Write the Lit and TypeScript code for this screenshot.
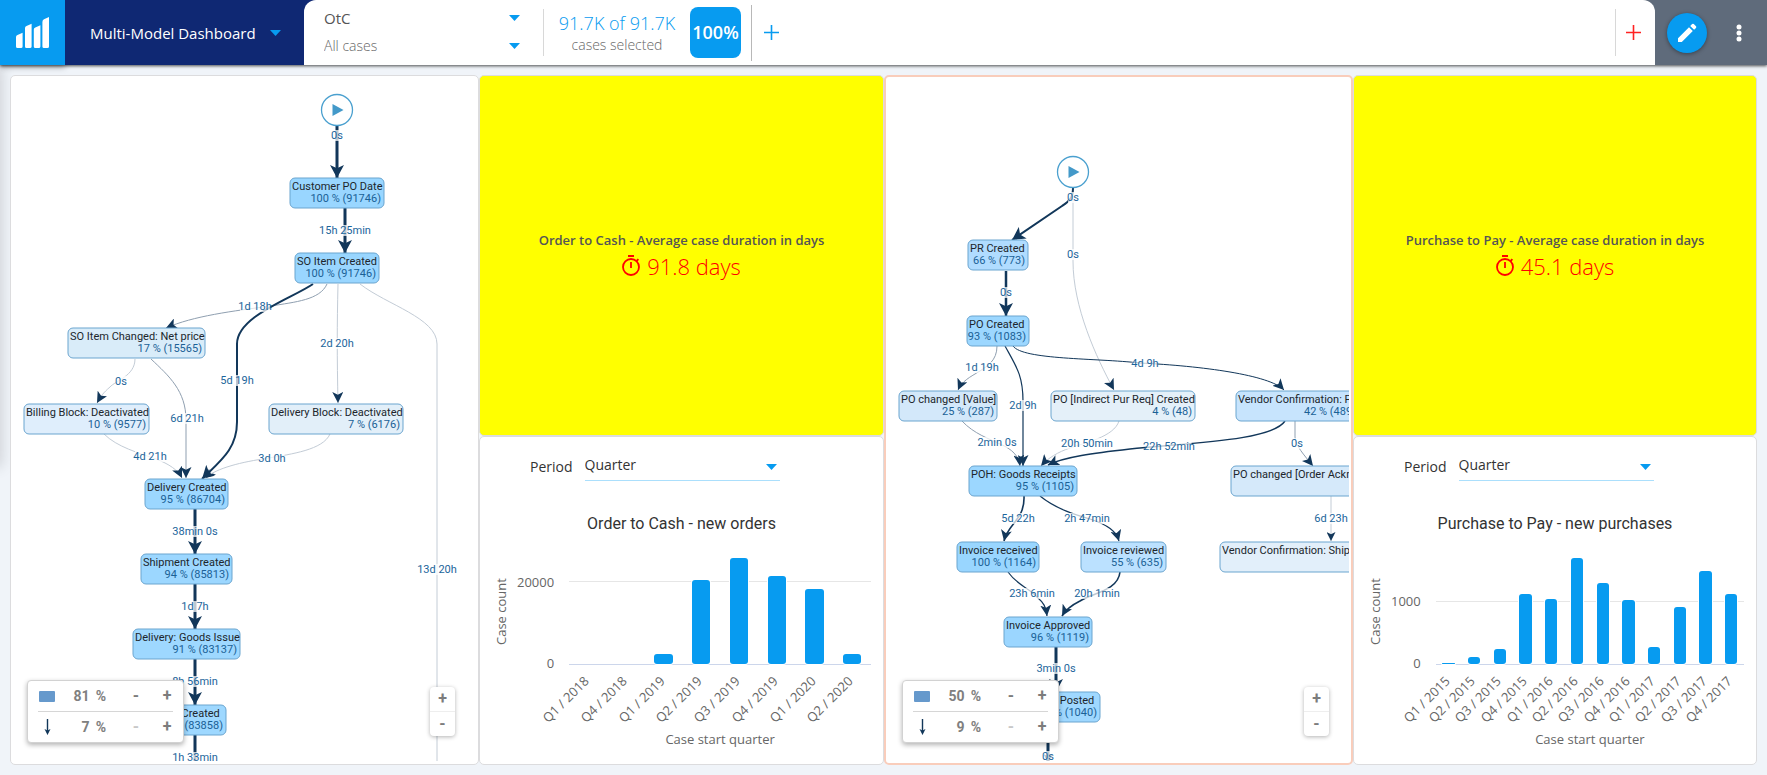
import { LitElement, html, svg, css, nothing } from "lit";
import { customElement, property } from "lit/decorators.js";

interface FlowNode {
  x: number;
  y: number;
  w: number;
  title: string;
  stat: string;
  fill: string;
}
interface FlowEdge {
  d: string;
  width: number;
  color: string;
  head?: "lg" | "md" | "sm";
}
type FlowLabel = [text: string, x: number, y: number];
interface Flow {
  start: [number, number];
  nodes: FlowNode[];
  edges: FlowEdge[];
  labels: FlowLabel[];
}
interface ChartData {
  title: string;
  max: number;
  tick: number;
  items: [string, number][];
}

const INK = "#12375a";
const MID = "#8f9fb0";
const PALE = "#c3ccd6";

const orderFlow: Flow = {
  start: [326, 34],
  nodes: [
    { x: 279, y: 102, w: 94, title: "Customer PO Date", stat: "100 % (91746)", fill: "#99d6ff" },
    { x: 284, y: 177, w: 84, title: "SO Item Created", stat: "100 % (91746)", fill: "#99d6ff" },
    { x: 57, y: 252, w: 137, title: "SO Item Changed: Net price", stat: "17 % (15565)", fill: "#d9ecf9" },
    { x: 13, y: 328, w: 125, title: "Billing Block: Deactivated", stat: "10 % (9577)", fill: "#dfeefc" },
    { x: 258, y: 328, w: 134, title: "Delivery Block: Deactivated", stat: "7 % (6176)", fill: "#e2eff9" },
    { x: 134, y: 403, w: 83, title: "Delivery Created", stat: "95 % (86704)", fill: "#9cd7ff" },
    { x: 130, y: 478, w: 91, title: "Shipment Created", stat: "94 % (85813)", fill: "#9cd7ff" },
    { x: 122, y: 553, w: 107, title: "Delivery: Goods Issue", stat: "91 % (83137)", fill: "#9ed8ff" },
    { x: 136, y: 629, w: 79, title: "Billing Created", stat: "91 % (83858)", fill: "#9ed8ff" },
  ],
  edges: [
    { d: "M326 50V102", width: 3, color: INK, head: "lg" },
    { d: "M334 132V177", width: 3, color: INK, head: "lg" },
    { d: "M316 208C309 224 284 226 260 230C222 235 182 240 155 252", width: 1, color: MID, head: "md" },
    { d: "M349 208C376 229 426 242 426 268V686", width: 1, color: PALE },
    { d: "M327 208C326 250 326 280 327 327", width: 1, color: PALE, head: "md" },
    { d: "M302 208C282 222 226 240 226 268V346C226 374 208 386 191 403", width: 2, color: INK, head: "lg" },
    { d: "M124 283C124 300 104 305 99 311C92 317 90 320 86 327", width: 1, color: PALE, head: "md" },
    { d: "M140 283C158 300 175 315 175 344V402", width: 1, color: MID, head: "md" },
    { d: "M93 358C106 371 128 377 145 383C158 388 167 394 171 402", width: 1, color: PALE, head: "md" },
    { d: "M319 358C312 374 280 378 258 382C230 386 206 392 194 402", width: 1, color: PALE, head: "sm" },
    { d: "M184 433V478", width: 3, color: INK, head: "lg" },
    { d: "M184 508V553", width: 3, color: INK, head: "lg" },
    { d: "M184 583V629", width: 3, color: INK, head: "lg" },
    { d: "M184 659V686", width: 3, color: INK },
  ],
  labels: [
    ["0s", 326, 63],
    ["15h 25min", 334, 158],
    ["1d 18h", 244, 234],
    ["5d 19h", 226, 308],
    ["2d 20h", 326, 271],
    ["0s", 110, 309],
    ["6d 21h", 176, 346],
    ["4d 21h", 139, 384],
    ["3d 0h", 261, 386],
    ["38min 0s", 184, 459],
    ["1d 7h", 184, 534],
    ["8h 56min", 184, 609],
    ["1h 33min", 184, 685],
    ["13d 20h", 426, 497],
  ],
};

const purchaseFlow: Flow = {
  start: [187, 95],
  nodes: [
    { x: 82, y: 163, w: 60, title: "PR Created", stat: "66 % (773)", fill: "#b0dcff" },
    { x: 81, y: 239, w: 62, title: "PO Created", stat: "93 % (1083)", fill: "#9cd7ff" },
    { x: 13, y: 314, w: 98, title: "PO changed [Value]", stat: "25 % (287)", fill: "#d3e8fa" },
    { x: 165, y: 314, w: 144, title: "PO [Indirect Pur Req] Created", stat: "4 % (48)", fill: "#e4f0f9" },
    { x: 350, y: 314, w: 123, title: "Vendor Confirmation: Pr", stat: "42 % (489)", fill: "#c7e4fd" },
    { x: 83, y: 389, w: 108, title: "POH: Goods Receipts", stat: "95 % (1105)", fill: "#9cd7ff" },
    { x: 345, y: 389, w: 200, title: "PO changed [Order Acknow]", stat: "20 % (235)", fill: "#d5e9fa" },
    { x: 71, y: 465, w: 82, title: "Invoice received", stat: "100 % (1164)", fill: "#99d6ff" },
    { x: 195, y: 465, w: 85, title: "Invoice reviewed", stat: "55 % (635)", fill: "#bbe1ff" },
    { x: 334, y: 465, w: 220, title: "Vendor Confirmation: Shipping", stat: "5 % (58)", fill: "#e2effa" },
    { x: 118, y: 540, w: 88, title: "Invoice Approved", stat: "96 % (1119)", fill: "#9bd6ff" },
    { x: 117, y: 615, w: 97, title: "PO Invoice Posted", stat: "89 % (1040)", fill: "#9fd8ff" },
  ],
  edges: [
    { d: "M187 111V184C187 230 210 280 228 313", width: 1, color: PALE, head: "md" },
    { d: "M187 111C187 122 182 125 176 129L126 163", width: 2, color: INK, head: "lg" },
    { d: "M120 194V239", width: 2.5, color: INK, head: "lg" },
    { d: "M111 269C111 284 101 289 94 294C84 300 76 304 72 313", width: 1, color: MID, head: "md" },
    { d: "M119 269C130 289 137 298 137 324V389", width: 1.2, color: INK, head: "md" },
    { d: "M127 269C137 283 210 281 254 286C316 289 384 298 398 313", width: 1, color: INK, head: "md" },
    { d: "M76 344C88 357 104 362 114 367C126 372 133 379 134 389", width: 1, color: MID, head: "md" },
    { d: "M233 344C228 360 198 366 184 371C172 375 162 381 155 389", width: 1, color: PALE, head: "md" },
    { d: "M399 344C386 364 300 366 244 372C208 376 178 380 162 388", width: 1.4, color: INK, head: "md" },
    { d: "M409 344V360C409 368 418 378 427 389", width: 1, color: MID, head: "md" },
    { d: "M138 419C139 443 122 446 118 464", width: 1.6, color: INK, head: "md" },
    { d: "M154 419C170 432 190 438 204 442C222 448 230 454 233 464", width: 1.2, color: INK, head: "md" },
    { d: "M445 419V464", width: 1, color: PALE, head: "sm" },
    { d: "M122 495C132 509 142 510 151 520C158 526 160 530 161 539", width: 1.2, color: INK, head: "md" },
    { d: "M234 495C232 514 206 516 194 524C186 528 180 532 176 539", width: 1.6, color: INK, head: "md" },
    { d: "M170 570V615", width: 3, color: INK, head: "lg" },
    { d: "M162 645V686", width: 3, color: INK, head: "sm" },
  ],
  labels: [
    ["0s", 187, 124],
    ["0s", 187, 181],
    ["0s", 120, 219],
    ["1d 19h", 96, 294],
    ["2d 9h", 137, 332],
    ["4d 9h", 259, 290],
    ["2min 0s", 111, 369],
    ["20h 50min", 201, 370],
    ["22h 52min", 283, 373],
    ["0s", 411, 370],
    ["5d 22h", 132, 445],
    ["2h 47min", 201, 445],
    ["6d 23h", 445, 445],
    ["23h 6min", 146, 520],
    ["20h 1min", 211, 520],
    ["3min 0s", 170, 595],
    ["0s", 162, 683],
  ],
};

const orderChart: ChartData = {
  title: "Order to Cash - new orders",
  max: 26000,
  tick: 20000,
  items: [
    ["Q1 / 2018", 0],
    ["Q4 / 2018", 0],
    ["Q1 / 2019", 2500],
    ["Q2 / 2019", 20700],
    ["Q3 / 2019", 26000],
    ["Q4 / 2019", 21600],
    ["Q1 / 2020", 18500],
    ["Q2 / 2020", 2500],
  ],
};

const purchaseChart: ChartData = {
  title: "Purchase to Pay - new purchases",
  max: 1700,
  tick: 1000,
  items: [
    ["Q1 / 2015", 20],
    ["Q2 / 2015", 115],
    ["Q3 / 2015", 240],
    ["Q4 / 2015", 1130],
    ["Q1 / 2016", 1050],
    ["Q2 / 2016", 1700],
    ["Q3 / 2016", 1300],
    ["Q4 / 2016", 1020],
    ["Q1 / 2017", 275],
    ["Q2 / 2017", 910],
    ["Q3 / 2017", 1495],
    ["Q4 / 2017", 1115],
  ],
};

const caret = html`<svg class="caret" width="11" height="6" viewBox="0 0 11 6" aria-hidden="true">
  <path d="M0 0H11L5.5 6Z" fill="#079bf0" />
</svg>`;

@customElement("process-flow")
export class ProcessFlow extends LitElement {
  @property({ attribute: false }) flow!: Flow;
  @property() activities = "";
  @property() connections = "";

  static styles = css`
    :host {
      display: block;
      position: relative;
      height: 100%;
      font-family: Roboto, sans-serif;
    }
    .graph {
      display: block;
      width: 100%;
      height: 100%;
    }
    .graph text {
      font-size: 11px;
    }
    .title {
      fill: #20262c;
    }
    .stat {
      fill: #1a6196;
      text-anchor: end;
    }
    .label {
      fill: #1c659b;
      text-anchor: middle;
    }
    .box {
      stroke: #6ba5cf;
    }
    .panel {
      position: absolute;
      left: 16px;
      bottom: 18px;
      width: 157px;
      box-sizing: border-box;
      padding: 0 10px;
      background: #fff;
      border: 1px solid #d2d2d2;
      border-radius: 4px;
      box-shadow: 0 2px 5px rgba(0, 0, 0, 0.3);
    }
    .line {
      display: grid;
      grid-template-columns: 18px 50px 40px minmax(0, 1fr);
      align-items: center;
      height: 30px;
      color: #808080;
      font-size: 14px;
      font-weight: 700;
    }
    .line + .line {
      border-top: 1px solid #d6d6d6;
    }
    .line svg {
      justify-self: center;
    }
    .value {
      display: flex;
      justify-content: flex-end;
      gap: 6px;
    }
    button {
      border: 0;
      padding: 0;
      background: none;
      font: 700 16px/24px Roboto, sans-serif;
      color: #7c7c7c;
      width: 20px;
      height: 24px;
      text-align: center;
    }
    button:disabled {
      color: #c8c8c8;
    }
    .line button {
      justify-self: end;
    }
    .line button:last-child {
      margin-right: -4px;
    }
    .zoom {
      position: absolute;
      right: 20px;
      bottom: 25px;
      display: grid;
      width: 25px;
      background: #fff;
      border-radius: 4px;
      box-shadow: 0 1px 4px rgba(0, 0, 0, 0.3);
    }
    .zoom button {
      width: 25px;
    }
    .zoom button + button {
      border-top: 1px solid #eee;
      height: 25px;
    }
  `;

  private head(id: string, len: number, half: number) {
    return svg`<marker id=${id} markerUnits="userSpaceOnUse" orient="auto" refX=${len} refY=${half}
      markerWidth=${len} markerHeight=${half * 2}>
      <path d="M0 0L${len} ${half}L0 ${half * 2}L${len / 4} ${half}Z" fill=${INK}></path>
    </marker>`;
  }

  render() {
    const { start, nodes, edges, labels } = this.flow;
    const [cx, cy] = start;
    return html`
      <svg class="graph" role="img" aria-label="Process flow">
        <defs>${this.head("lg", 13, 7)}${this.head("md", 11, 5.5)}${this.head("sm", 9, 4.5)}</defs>
        ${edges.map(
          (e) => svg`<path d=${e.d} fill="none" stroke=${e.color} stroke-width=${e.width}
            marker-end=${e.head ? `url(#${e.head})` : nothing}></path>`
        )}
        <circle cx=${cx} cy=${cy} r="15.5" fill="#fff" stroke="#4aa0cf" stroke-width="1.3"></circle>
        <path d="M${cx - 4.5} ${cy - 6}L${cx + 6.5} ${cy}L${cx - 4.5} ${cy + 6}Z" fill="#4399c9"></path>
        ${nodes.map(
          (n) => svg`<g>
            <rect class="box" x=${n.x} y=${n.y} width=${n.w} height="30" rx="5" fill=${n.fill}></rect>
            <text class="title" x=${n.x + 2} y=${n.y + 12}>${n.title}</text>
            <text class="stat" x=${n.x + n.w - 3} y=${n.y + 24}>${n.stat}</text>
          </g>`
        )}
        ${labels.map(([text, x, y]) => {
          const w = text.length * 5;
          return svg`<rect x=${x - w / 2} y=${y - 9} width=${w} height="11" fill="#fff" fill-opacity=".72"></rect>
            <text class="label" x=${x} y=${y}>${text}</text>`;
        })}
      </svg>
      <div class="panel">
        <div class="line">
          <svg width="16" height="11" aria-hidden="true"><rect width="16" height="11" rx="1" fill="#6699cc" /></svg>
          <span class="value"><span>${this.activities}</span><span>%</span></span>
          <button aria-label="Fewer activities">-</button>
          <button aria-label="More activities">+</button>
        </div>
        <div class="line">
          <svg width="7" height="16" viewBox="0 0 7 16" aria-hidden="true">
            <path d="M3.5 0V12" stroke=${INK} stroke-width="1.4" />
            <path d="M0.5 10L3.5 16L6.5 10L3.5 11.5Z" fill=${INK} />
          </svg>
          <span class="value"><span>${this.connections}</span><span>%</span></span>
          <button aria-label="Fewer connections" disabled>-</button>
          <button aria-label="More connections">+</button>
        </div>
      </div>
      <div class="zoom">
        <button aria-label="Zoom in">+</button>
        <button aria-label="Zoom out">-</button>
      </div>
    `;
  }
}

@customElement("case-chart")
export class CaseChart extends LitElement {
  @property({ attribute: false }) data!: ChartData;

  static styles = css`
    :host {
      display: block;
      font-family: "Open Sans", sans-serif;
      color: #333;
    }
    .period {
      display: flex;
      align-items: flex-start;
      gap: 12px;
      height: 30px;
      padding: 15px 0 0 50px;
      font-size: 14px;
    }
    label {
      line-height: 30px;
    }
    .pick {
      position: relative;
      flex: 0 1 195px;
      border-bottom: 1px solid #abdffc;
    }
    select {
      appearance: none;
      display: block;
      width: 100%;
      height: 28px;
      margin: 0;
      padding: 0 0 2px;
      border: 0;
      background: none;
      font: 14px/26px "Open Sans", sans-serif;
      color: #333;
    }
    .caret {
      position: absolute;
      right: 3px;
      top: 12px;
      pointer-events: none;
    }
    h2 {
      margin: 30px 0 0;
      font: 400 16px/24px Roboto, sans-serif;
      text-align: center;
    }
    .chart {
      display: grid;
      grid-template-columns: 18px auto minmax(0, 1fr);
      grid-template-rows: 107px 65px 20px;
      padding: 22px 12px 0 12px;
      font-size: 13px;
      line-height: 18px;
      color: #666;
    }
    .ytitle {
      writing-mode: vertical-rl;
      transform: rotate(180deg);
      text-align: center;
    }
    .ticks {
      display: grid;
      grid-template-rows: minmax(0, 1fr) auto;
      margin: 0 15px 0 7px;
      padding-bottom: 2px;
      text-align: right;
    }
    .tick {
      line-height: 0;
    }
    .top {
      align-self: end;
    }
    .plot {
      position: relative;
      display: flex;
      border-bottom: 1px solid #ccd6eb;
    }
    .rule {
      position: absolute;
      left: 0;
      right: 0;
      height: 1px;
      background: #e6e6e6;
    }
    .slot {
      position: relative;
      flex: 1;
      display: flex;
      align-items: flex-end;
      justify-content: center;
    }
    .bar {
      width: 48%;
      background: #079bf0;
      border-radius: 3px;
      box-shadow: 0 0 0 1px #fff;
    }
    .cats {
      grid-column: 3;
      display: flex;
      margin-left: -8px;
      margin-right: 8px;
      padding-top: 7px;
    }
    .cat {
      flex: 1;
      min-width: 0;
    }
    .half {
      width: 50%;
      display: flex;
      justify-content: flex-end;
    }
    .half span {
      height: 18px;
      white-space: nowrap;
      transform: rotate(-45deg);
      transform-origin: 100% 0;
    }
    .xtitle {
      grid-column: 3;
      text-align: center;
    }
  `;

  render() {
    const { title, max, tick, items } = this.data;
    return html`
      <div class="period">
        <label for="period">Period</label>
        <div class="pick">
          <select id="period">
            <option>Quarter</option>
            <option>Month</option>
          </select>
          ${caret}
        </div>
      </div>
      <h2>${title}</h2>
      <div class="chart">
        <div class="ytitle">Case count</div>
        <div class="ticks">
          <div class="tick top" style="height:${(tick / max) * 100}%">${tick}</div>
          <div class="tick">0</div>
        </div>
        <div class="plot">
          <div class="rule" style="bottom:${(tick / max) * 100}%"></div>
          ${items.map(
            ([, v]) => html`<div class="slot">
              ${v ? html`<div class="bar" style="height:${(v / max) * 100}%"></div>` : nothing}
            </div>`
          )}
        </div>
        <div class="cats">
          ${items.map(([name]) => html`<div class="cat"><div class="half"><span>${name}</span></div></div>`)}
        </div>
        <div class="xtitle">Case start quarter</div>
      </div>
    `;
  }
}

@customElement("app-root")
export class AppRoot extends LitElement {
  static styles = css`
    :host {
      display: flex;
      flex-direction: column;
      height: 100vh;
      overflow: hidden;
      background: #f0f4f9;
      font-family: "Open Sans", sans-serif;
    }
    button {
      border: 0;
      padding: 0;
      background: none;
      font: inherit;
      color: inherit;
    }
    header {
      position: relative;
      z-index: 1;
      display: flex;
      height: 65px;
      flex: none;
      background: linear-gradient(90deg, #0f2873 50%, #5f6b7b 50%);
      box-shadow: 0 1px 3px rgba(0, 0, 0, 0.7);
    }
    .logo {
      display: grid;
      place-items: center;
      width: 65px;
      background: #079bf0;
      box-shadow: 0 2px 6px rgba(0, 0, 0, 0.35);
    }
    .board {
      display: flex;
      align-items: center;
      justify-content: space-between;
      box-sizing: border-box;
      width: 239px;
      padding: 0 23px 0 25px;
      background: #0f2873;
      color: #fff;
      font-size: 15px;
      font-weight: 500;
    }
    .bar {
      flex: 1;
      display: flex;
      align-items: center;
      background: #fff;
      border-radius: 12px 12px 0 0;
    }
    .models {
      display: grid;
      grid-template-rows: 28px 28px;
      width: 196px;
      padding-bottom: 2px;
      margin-left: 20px;
      margin-right: 23px;
    }
    .model {
      position: relative;
    }
    .model select {
      appearance: none;
      display: block;
      width: 100%;
      height: 28px;
      margin: 0;
      padding: 0;
      border: 0;
      background: none;
      font: 300 14px/28px "Open Sans", sans-serif;
      color: #666;
    }
    .model .main {
      font-size: 15px;
      font-weight: 400;
      color: #555;
    }
    .model .caret {
      position: absolute;
      right: 0;
      top: 11px;
      pointer-events: none;
    }
    .split {
      width: 1px;
      height: 47px;
      background: #d8d8d8;
    }
    .tall {
      height: 56px;
      background: #b8b8b8;
      margin: 0 12px 0 10px;
    }
    .cases {
      width: 146px;
      text-align: center;
    }
    .count {
      font-size: 18px;
      line-height: 24px;
      font-weight: 300;
      color: #079bf0;
    }
    .hint {
      font-size: 14px;
      line-height: 19px;
      font-weight: 300;
      color: #666;
    }
    .badge {
      width: 51px;
      height: 51px;
      border-radius: 8px;
      background: #079bf0;
      color: #fff;
      font-size: 18px;
      font-weight: 600;
      line-height: 51px;
      text-align: center;
    }
    .space {
      flex: 1;
    }
    .end {
      margin-right: 10px;
    }
    .bar button {
      display: grid;
      place-items: center;
      width: 15px;
      height: 15px;
    }
    .bar .red {
      margin-right: 14px;
    }
    .tools {
      display: flex;
      align-items: center;
      width: 112px;
      background: #5f6b7b;
    }
    .edit {
      display: grid;
      place-items: center;
      width: 40px;
      height: 40px;
      margin-left: 12px;
      border-radius: 50%;
      background: #079bf0;
      box-shadow: 0 1px 4px rgba(0, 0, 0, 0.4);
    }
    .more {
      width: 24px;
      height: 24px;
      margin-left: 20px;
    }
    main {
      position: relative;
      flex: 1;
      min-height: 0;
      display: grid;
      grid-template-columns: 469fr 405fr 469fr 404fr;
      padding: 10px;
    }
    main::before {
      content: "";
      position: absolute;
      left: -20px;
      top: 0;
      width: 20px;
      height: 398px;
      box-shadow: 0 2px 14px 2px rgba(0, 0, 0, 0.14);
    }
    .stack {
      display: grid;
      grid-template-rows: 361fr 329fr;
      min-width: 0;
      min-height: 0;
    }
    .card {
      position: relative;
      box-sizing: border-box;
      min-width: 0;
      min-height: 0;
      overflow: hidden;
      background: #fff;
      border: 1px solid #dcdcde;
      border-radius: 5px;
    }
    .flow {
      padding: 0 3px 3px 0;
    }
    .active {
      border: 2px solid #f9cdbb;
      padding: 0 2px 2px 0;
    }
    .kpi {
      display: flex;
      flex-direction: column;
      align-items: center;
      justify-content: center;
      background: #ff0;
    }
    .name {
      font-size: 13px;
      font-weight: 600;
      line-height: 20px;
      color: #555;
      margin: 0;
    }
    .figure {
      display: flex;
      align-items: center;
      gap: 7px;
      margin: 0;
      font-size: 22px;
      font-weight: 300;
      line-height: 32px;
      color: #f00;
    }
  `;

  private plus(color: string) {
    return html`<svg width="15" height="15" viewBox="0 0 15 15" aria-hidden="true">
      <path d="M7.5 0V15M0 7.5H15" stroke=${color} stroke-width="1.6" />
    </svg>`;
  }

  private kpi(name: string, value: string) {
    return html`<section class="card kpi">
      <h2 class="name">${name}</h2>
      <p class="figure">
        <svg width="18" height="21" viewBox="0 0 18 21" fill="none" stroke="#f00" stroke-width="1.8" aria-hidden="true">
          <circle cx="9" cy="12" r="8" />
          <path d="M6 1H12M9 7V13M14.6 6L16.4 4.2" />
        </svg>
        <span>${value}</span>
      </p>
    </section>`;
  }

  render() {
    return html`
      <header>
        <div class="logo">
          <svg width="33" height="31" viewBox="0 0 33 31" fill="#fff" role="img" aria-label="Home">
            <path d="M0 20Q0 18.500 1.500 18L6.600 15.800V29.500Q6.600 31 5 31H1.500Q0 31 0 29.500Z" />
            <path d="M9 11Q9 9.500 10.500 9L15.600 6.800V29.500Q15.600 31 14 31H10.500Q9 31 9 29.500Z" />
            <path d="M17.800 12.500Q17.800 11 19.300 10.500L24.400 8.300V29.500Q24.400 31 22.800 31H19.300Q17.800 31 17.800 29.500Z" />
            <path d="M26.400 5Q26.400 3 28 2.300L33 0V29.500Q33 31 31.400 31H28Q26.400 31 26.400 29.500Z" />
          </svg>
        </div>
        <button class="board"><span>Multi-Model Dashboard</span>${caret}</button>
        <div class="bar">
          <div class="models">
            <div class="model">
              <select class="main" aria-label="Model"><option>OtC</option></select>${caret}
            </div>
            <div class="model">
              <select aria-label="Filter"><option>All cases</option></select>${caret}
            </div>
          </div>
          <div class="split"></div>
          <div class="cases">
            <div class="count">91.7K of 91.7K</div>
            <div class="hint">cases selected</div>
          </div>
          <div class="badge">100%</div>
          <div class="split tall"></div>
          <button aria-label="Add filter">${this.plus("#079bf0")}</button>
          <div class="space"></div>
          <div class="split end"></div>
          <button class="red" aria-label="Add model">${this.plus("#f22")}</button>
        </div>
        <div class="tools">
          <button class="edit" aria-label="Edit">
            <svg width="20" height="20" viewBox="0 0 20 20" fill="#fff" aria-hidden="true">
              <path d="M1 15.200V19H4.800L15.800 8L12 4.200ZM19 4.900Q19.700 4 19 3.200L16.800 1Q16 0.300 15.100 1L13.200 2.900L17.100 6.800Z" />
            </svg>
          </button>
          <button class="more" aria-label="More">
            <svg width="24" height="24" viewBox="0 0 24 24" fill="#fff" aria-hidden="true">
              <circle cx="12" cy="6" r="2.500" />
              <circle cx="12" cy="12" r="2.500" />
              <circle cx="12" cy="18" r="2.500" />
            </svg>
          </button>
        </div>
      </header>
      <main>
        <section class="card flow">
          <process-flow .flow=${orderFlow} activities="81" connections="7"></process-flow>
        </section>
        <div class="stack">
          ${this.kpi("Order to Cash - Average case duration in days", "91.8 days")}
          <section class="card"><case-chart .data=${orderChart}></case-chart></section>
        </div>
        <section class="card flow active">
          <process-flow .flow=${purchaseFlow} activities="50" connections="9"></process-flow>
        </section>
        <div class="stack">
          ${this.kpi("Purchase to Pay - Average case duration in days", "45.1 days")}
          <section class="card"><case-chart .data=${purchaseChart}></case-chart></section>
        </div>
      </main>
    `;
  }
}
